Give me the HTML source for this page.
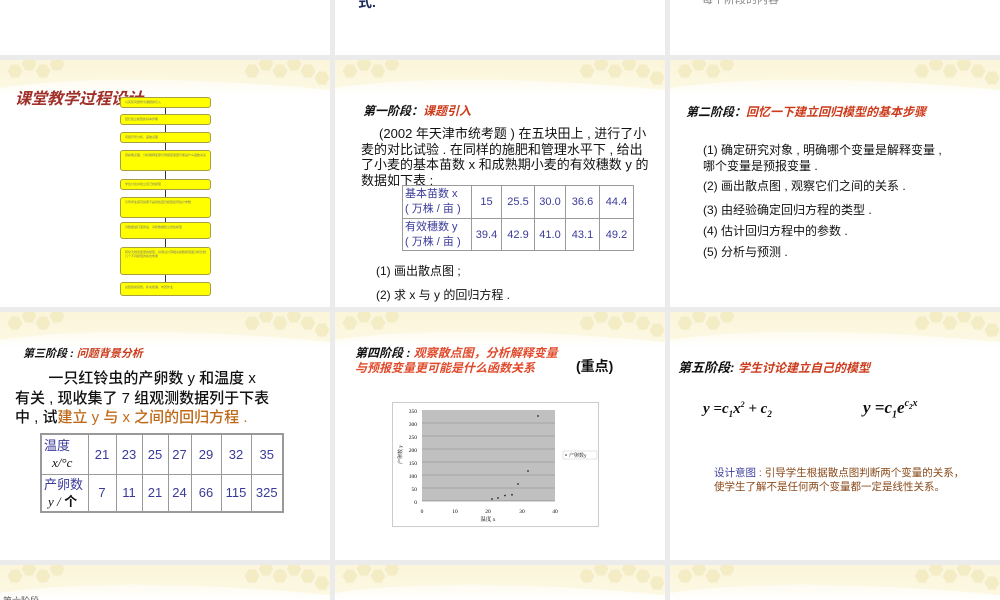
<!DOCTYPE html>
<html><head><meta charset="utf-8"><style>
*{margin:0;padding:0;box-sizing:border-box}
body{width:1000px;height:600px;background:#ebebeb;position:relative;overflow:hidden;font-family:"Liberation Sans","Noto Sans CJK SC",sans-serif;color:#111}
.s{position:absolute;background:#fff;overflow:hidden}
.band{position:absolute;left:0;top:0;width:330px;height:36px}
.a{position:absolute;white-space:nowrap}
.ti{font-style:italic;font-weight:bold}
.red{color:#cc3a1a}
table{border-collapse:collapse;position:absolute}
td{border:1px solid #9a9a9a;color:#3a3a9a;text-align:center}
.fb{position:absolute;left:120px;width:91px;background:#ffff00;border:1px solid #a8a040;border-radius:3px;font-size:3px;color:#777;padding:2px 4px;line-height:4px}
.ar{position:absolute;left:165px;width:1px;background:#333}
</style></head><body>
<svg width="0" height="0" style="position:absolute"><defs>
<linearGradient id="gr" x1="0" y1="0" x2="0" y2="1"><stop offset="0" stop-color="#fbf6dc"/><stop offset="1" stop-color="#ffffff"/></linearGradient>
<g id="hb">
<rect width="330" height="36" fill="url(#gr)"/>
<path d="M0 28 Q120 10 330 30 L330 0 L0 0Z" fill="#fbf5d8" opacity=".7"/>
<g fill="#f3ebc0" stroke="#faf6e2" stroke-width="1" opacity=".85">
<polygon points="7,11 11,4 19,4 23,11 19,18 11,18"/>
<polygon points="21,4 25,-3 33,-3 37,4 33,11 25,11"/>
<polygon points="35,11 39,4 47,4 51,11 47,18 39,18"/>
<polygon points="49,4 53,-3 61,-3 65,4 61,11 53,11"/>
<polygon points="244,11 248,4 256,4 260,11 256,18 248,18"/>
<polygon points="258,4 262,-3 270,-3 274,4 270,11 262,11"/>
<polygon points="272,11 276,4 284,4 288,11 284,18 276,18"/>
<polygon points="286,4 290,-3 298,-3 302,4 298,11 290,11"/>
<polygon points="300,11 304,4 312,4 316,11 312,18 304,18"/>
<polygon points="314,18 318,11 326,11 330,18 326,25 318,25"/>
</g></g>
</defs></svg>

<div class="s" style="left:0;top:0;width:330px;height:55px"></div>
<div class="s" style="left:335px;top:0;width:330px;height:55px"><div class="a" style="left:23px;top:-8px;font-size:14px;font-weight:bold;color:#1a2a5a">式.</div></div>
<div class="s" style="left:670px;top:0;width:330px;height:55px"><div class="a" style="left:32px;top:-9px;font-size:11px;color:#888">每个阶段的内容</div></div>

<div class="s" style="left:0;top:60px;width:330px;height:247px">
<svg class="band"><use href="#hb"/></svg>
<div class="a ti" style="left:15px;top:25px;font-size:16px;color:#a0302a">课堂教学过程设计</div>
<div class="fb" style="top:37px;height:11px">以实际问题作为课题的引入</div>
<div class="fb" style="top:54px;height:11px">回忆建立模型的基本步骤</div>
<div class="fb" style="top:72px;height:11px">问题背景分析，画散点图</div>
<div class="fb" style="top:90px;height:21px">观察散点图，分析解释变量与预报变量更可能是什么函数关系</div>
<div class="fb" style="top:119px;height:11px">学生讨论并建立自己的模型</div>
<div class="fb" style="top:137px;height:21px">引导学生探究如果不是线性回归模型如何估计参数</div>
<div class="fb" style="top:162px;height:17px">对数据进行变换后，对新数据建立线性模型</div>
<div class="fb" style="top:187px;height:28px">转化为线性变量的模型，并通过计算相关指数和残差分析比较几个不同模型的拟合效果</div>
<div class="fb" style="top:222px;height:14px">总结建模思想，补充拓展，布置作业</div>
<div class="ar" style="top:48px;height:6px"></div><div class="ar" style="top:65px;height:7px"></div><div class="ar" style="top:83px;height:7px"></div><div class="ar" style="top:111px;height:8px"></div><div class="ar" style="top:130px;height:7px"></div><div class="ar" style="top:158px;height:4px"></div><div class="ar" style="top:179px;height:8px"></div><div class="ar" style="top:215px;height:7px"></div>
</div>

<div class="s" style="left:335px;top:60px;width:330px;height:247px">
<svg class="band"><use href="#hb"/></svg>
<div class="a ti" style="left:28px;top:42px;font-size:12px">第一阶段：<span class="red">课题引入</span></div>
<div class="a" style="left:26px;top:66px;font-size:13px;line-height:15.5px;white-space:normal;width:290px">&nbsp;&nbsp;&nbsp;&nbsp;&nbsp;(2002 年天津市统考题 ) 在五块田上 , 进行了小麦的对比试验 . 在同样的施肥和管理水平下 , 给出了小麦的基本苗数 x 和成熟期小麦的有效穗数 y 的数据如下表 :</div>
<table style="left:67px;top:125px;font-size:11px">
<tr style="height:33px"><td style="width:69px;text-align:left;padding-left:2px;line-height:15px">基本苗数 x<br>( 万株 / 亩 )</td><td style="width:30px">15</td><td style="width:33px">25.5</td><td style="width:31px">30.0</td><td style="width:34px">36.6</td><td style="width:34px">44.4</td></tr>
<tr style="height:32px"><td style="text-align:left;padding-left:2px;line-height:15px">有效穗数 y<br>( 万株 / 亩 )</td><td>39.4</td><td>42.9</td><td>41.0</td><td>43.1</td><td>49.2</td></tr>
</table>
<div class="a" style="left:41px;top:202px;font-size:12px">(1) 画出散点图 ;</div>
<div class="a" style="left:41px;top:226px;font-size:12px">(2) 求 x 与 y 的回归方程 .</div>
</div>

<div class="s" style="left:670px;top:60px;width:330px;height:247px">
<svg class="band"><use href="#hb"/></svg>
<div class="a ti" style="left:16px;top:43px;font-size:12px">第二阶段：<span class="red">回忆一下建立回归模型的基本步骤</span></div>
<div class="a" style="left:33px;top:83px;font-size:12px;line-height:15.5px">(1) 确定研究对象 , 明确哪个变量是解释变量 ,<br>哪个变量是预报变量 .</div>
<div class="a" style="left:33px;top:117px;font-size:12px">(2) 画出散点图 , 观察它们之间的关系 .</div>
<div class="a" style="left:33px;top:141px;font-size:12px">(3) 由经验确定回归方程的类型 .</div>
<div class="a" style="left:33px;top:162px;font-size:12px">(4) 估计回归方程中的参数 .</div>
<div class="a" style="left:33px;top:183px;font-size:12px">(5) 分析与预测 .</div>
</div>

<div class="s" style="left:0;top:312px;width:330px;height:248px">
<svg class="band"><use href="#hb"/></svg>
<div class="a ti" style="left:23px;top:33px;font-size:11px">第三阶段 : <span class="red">问题背景分析</span></div>
<div class="a" style="left:15px;top:57px;font-size:15px;line-height:19.5px;font-weight:500">&nbsp;&nbsp;&nbsp;&nbsp;&nbsp;&nbsp;&nbsp;&nbsp;一只红铃虫的产卵数 y 和温度 x<br>有关 , 现收集了 7 组观测数据列于下表<br>中 , 试<span style="color:#c06818">建立 y 与 x 之间的回归方程 .</span></div>
<table style="left:40px;top:121px;font-size:13px;border:2px solid #999">
<tr style="height:40px"><td style="width:47px;text-align:left;padding-left:2px;line-height:17px">温度<br><span style="color:#111;font-family:'Liberation Serif',serif;font-style:italic;padding-left:8px">x/°c</span></td><td style="width:28px">21</td><td style="width:26px">23</td><td style="width:26px">25</td><td style="width:23px">27</td><td style="width:30px">29</td><td style="width:30px">32</td><td style="width:32px">35</td></tr>
<tr style="height:38px"><td style="text-align:left;padding-left:2px;line-height:17px">产卵数<br><span style="color:#111;font-family:'Liberation Serif',serif;font-style:italic;padding-left:4px">y /</span><b style="color:#111"> 个</b></td><td>7</td><td>11</td><td>21</td><td>24</td><td>66</td><td>115</td><td>325</td></tr>
</table>
</div>

<div class="s" style="left:335px;top:312px;width:330px;height:248px">
<svg class="band"><use href="#hb"/></svg>
<div class="a ti red" style="left:20px;top:34px;font-size:12px;line-height:15px;color:#e04a2a"><span style="color:#111">第四阶段 : </span>观察散点图，分析解释变量<br>与预报变量更可能是什么函数关系</div>
<div class="a" style="left:241px;top:44px;font-size:14px;font-weight:bold">(重点)</div>
<svg style="position:absolute;left:57px;top:90px" width="207" height="126" font-family="Liberation Serif,Noto Serif CJK SC,serif" font-size="5.5">
<rect x="0.5" y="0.5" width="206" height="124" fill="#fff" stroke="#ccc"/>
<rect x="30" y="8" width="133" height="91" fill="#c0c0c0"/>
<g stroke="#888" stroke-width=".5"><line x1="30" y1="21" x2="163" y2="21"/><line x1="30" y1="34" x2="163" y2="34"/><line x1="30" y1="47" x2="163" y2="47"/><line x1="30" y1="60" x2="163" y2="60"/><line x1="30" y1="73" x2="163" y2="73"/><line x1="30" y1="86" x2="163" y2="86"/></g>
<line x1="30" y1="99" x2="163" y2="99" stroke="#666" stroke-width=".5"/>
<g text-anchor="end"><text x="25" y="11">350</text><text x="25" y="24">300</text><text x="25" y="37">250</text><text x="25" y="50">200</text><text x="25" y="63">150</text><text x="25" y="76">100</text><text x="25" y="89">50</text><text x="25" y="102">0</text></g>
<g text-anchor="middle"><text x="30" y="111">0</text><text x="63" y="111">10</text><text x="96" y="111">20</text><text x="130" y="111">30</text><text x="163" y="111">40</text><text x="96" y="119">温度 x</text></g>
<text x="0" y="0" transform="translate(10,62) rotate(-90)" font-size="5">产卵数 y</text>
<g fill="#223"><circle cx="100" cy="97" r=".9"/><circle cx="106" cy="96" r=".9"/><circle cx="113" cy="93.5" r=".9"/><circle cx="120" cy="92.8" r=".9"/><circle cx="126" cy="82" r=".9"/><circle cx="136" cy="69" r=".9"/><circle cx="146" cy="14" r=".9"/></g>
<rect x="171" y="49" width="34" height="8" fill="#fff" stroke="#ccc" stroke-width=".5"/>
<circle cx="174" cy="53" r=".8" fill="#223"/><text x="177" y="55" font-size="5">产卵数y</text>
</svg>
</div>

<div class="s" style="left:670px;top:312px;width:330px;height:248px">
<svg class="band"><use href="#hb"/></svg>
<div class="a ti" style="left:8px;top:45px;font-size:13px">第五阶段:  <span class="red" style="font-size:12px">学生讨论建立自己的模型</span></div>
<div class="a" style="left:33px;top:88px;font-size:15px;font-family:'Liberation Serif',serif;font-style:italic;font-weight:bold">y =c<sub style="font-size:9px">1</sub>x<sup style="font-size:8px">2</sup> + c<sub style="font-size:9px">2</sub></div>
<div class="a" style="left:193px;top:86px;font-size:17px;font-family:'Liberation Serif',serif;font-style:italic;font-weight:bold">y =c<sub style="font-size:10px">1</sub>e<sup style="font-size:10px">c<sub style="font-size:7px">2</sub>x</sup></div>
<div class="a" style="left:44px;top:154px;font-size:10.5px;line-height:14px;color:#8a4a1a"><span style="color:#4040a0">设计意图</span> : 引导学生根据散点图判断两个变量的关系，<br>使学生了解不是任何两个变量都一定是线性关系。</div>
</div>

<div class="s" style="left:0;top:565px;width:330px;height:35px"><svg class="band"><use href="#hb"/></svg><div class="a" style="left:3px;top:29px;font-size:9px;color:#555">第六阶段</div></div>
<div class="s" style="left:335px;top:565px;width:330px;height:35px"><svg class="band"><use href="#hb"/></svg></div>
<div class="s" style="left:670px;top:565px;width:330px;height:35px"><svg class="band"><use href="#hb"/></svg></div>
</body></html>
